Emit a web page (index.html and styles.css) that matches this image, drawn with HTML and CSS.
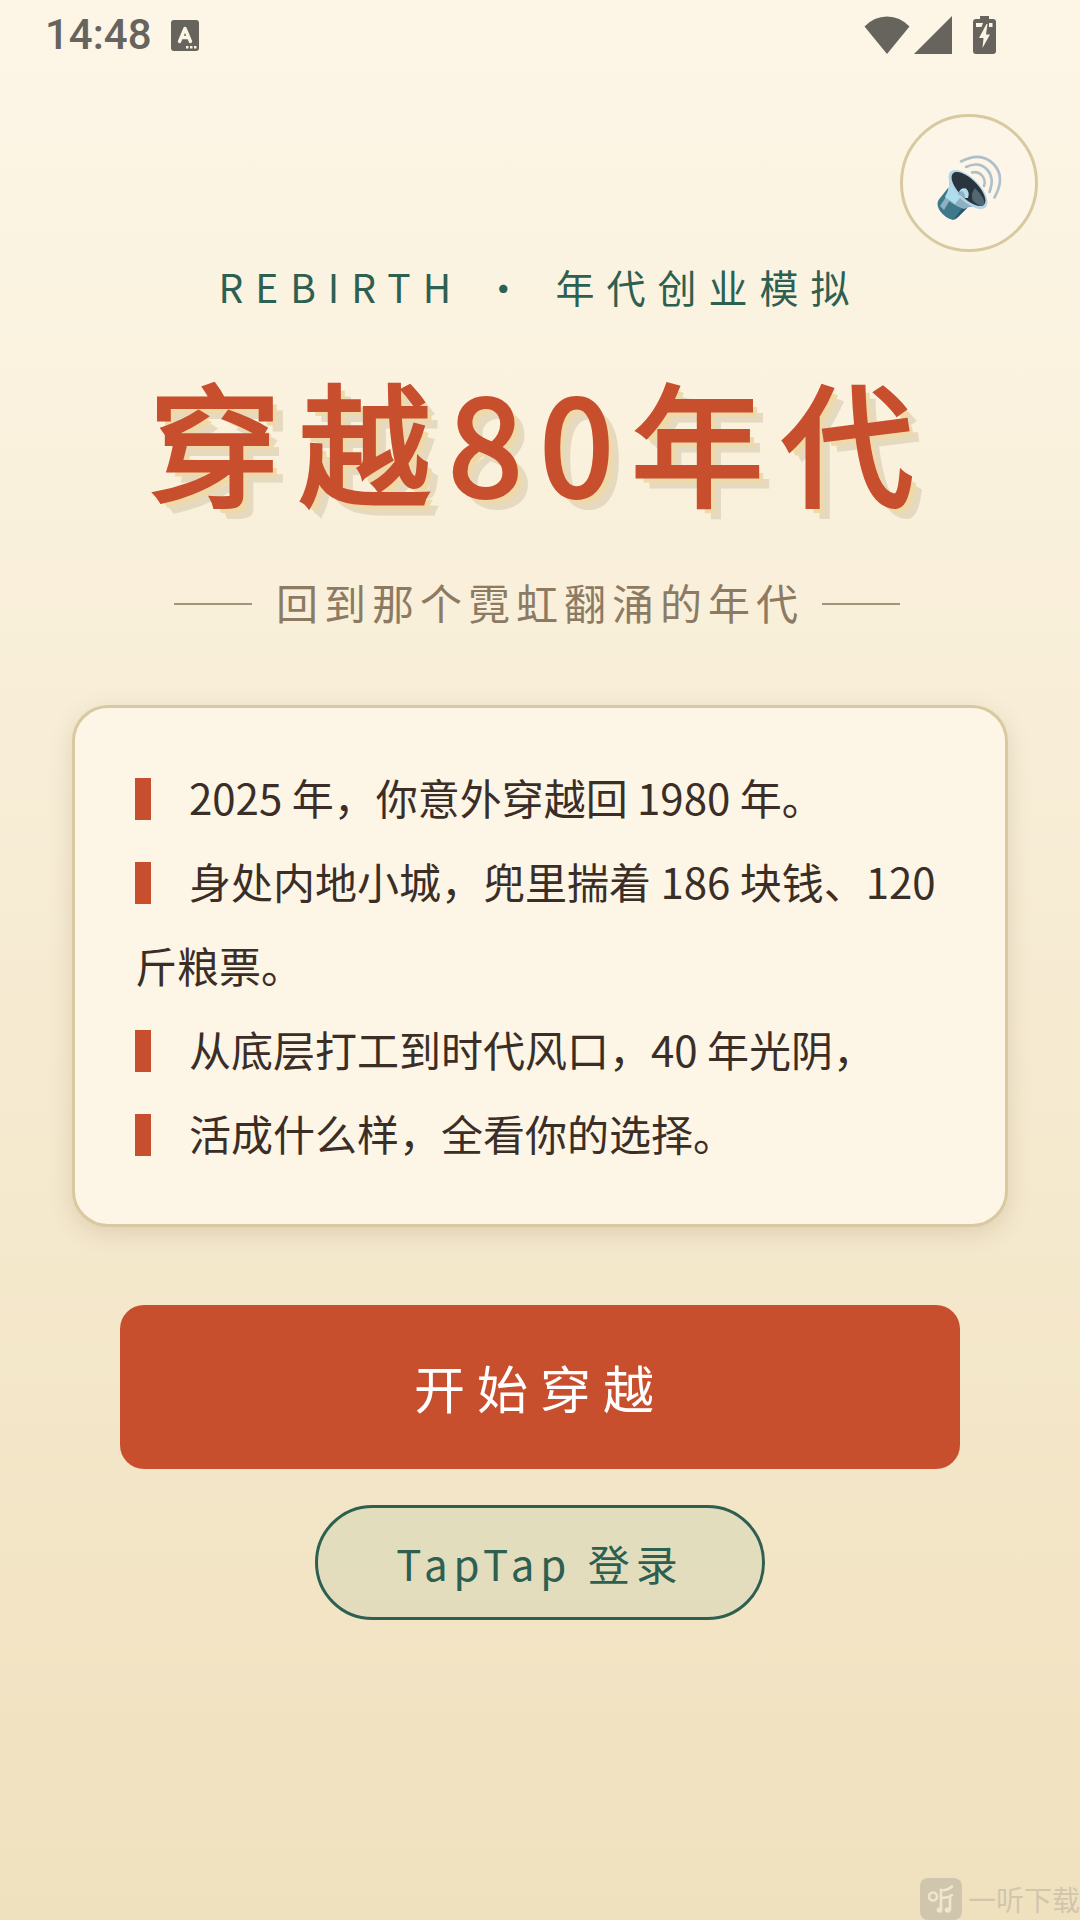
FILE: index.html
```html
<!DOCTYPE html>
<html lang="zh-CN">
<head>
    <meta charset="UTF-8">
    <meta name="viewport" content="width=device-width, initial-scale=1.0">
    <title>穿越80年代</title>
    <link rel="stylesheet" href="styles.css">
</head>
<body>
    <header class="status-bar">
        <div class="status-left">
            <span class="time">14:48</span>
            <svg width="28" height="31" viewBox="0 0 28 31">
                <rect width="28" height="31" rx="3" fill="#66645c"/>
                <path d="M8.500 21.500L14 8.500L19.500 21.500M10.500 17.500H17.500" fill="none" stroke="#fbf4e4" stroke-width="3.400" stroke-linecap="round" stroke-linejoin="round"/>
                <path d="M15 26h2.500v2.500h-2.500zM19 26h2.500v2.500h-2.500zM23 26h2.500v2.500h-2.500z" fill="#fbf4e4"/>
            </svg>
        </div>
        <div class="status-right">
            <svg width="46" height="38" viewBox="0 0 46 38" fill="#66645c">
                <path d="M0.500 10.500Q10 0.500 23 0.500T45.500 10.500L23 38z"/>
            </svg>
            <svg width="38" height="38" viewBox="0 0 38 38" fill="#66645c">
                <path d="M38 0V38H0z"/>
            </svg>
            <svg class="battery" width="23" height="38" viewBox="0 0 23 38">
                <path d="M7 0h9v3h4q3 0 3 3v29q0 3-3 3H3q-3 0-3-3V6q0-3 3-3h4z" fill="#66645c"/>
                <path d="M3 7h7l-1.500 4H3zM16 7H19.500v4h-3.500z" fill="#fbf4e4"/>
                <path d="M13.500 8L6 22h4.500L9.500 32L17 18.500h-4L14.500 8z" fill="#fbf4e4"/>
            </svg>
        </div>
    </header>

    <div class="toolbar">
        <button class="sound-btn" type="button" aria-label="声音">
            <svg width="66" height="66" viewBox="0 0 66 66">
                <!-- 喇叭底座 -->
                <path d="M12 33L2.500 45Q0 50 4 56Q9 63 17 65Q20 65 22 62L32 52z" fill="#3f788a"/>
                <path d="M22 62L31 53L28 51L18 64z" fill="#285a6c"/>
                <path d="M10 42L4 51L8 55L14 45z" fill="#8fb0c3"/>
                <path d="M13 18Q15 33 9 42Q16 50 28 54Q35 50 46 53z" fill="#8fb0c3"/>
                <path d="M13 20Q15 33 9 42L19 49L27 39z" fill="#aedeed"/>
                <!-- 喇叭口 -->
                <ellipse cx="32" cy="34.500" rx="25" ry="11.500" transform="rotate(45 32 34.500)" fill="#b2d4e8"/>
                <ellipse cx="32.500" cy="34" rx="22" ry="9.500" transform="rotate(45 32.500 34)" fill="#29343e"/>
                <path d="M39 33Q34 39 37 46Q45 53 48 50Q50 44 39 33z" fill="#536770"/>
                <path d="M23 37Q25 32 30 33.500Q34 37 32 43L29 43z" fill="#aedeed"/>
                <path d="M22 39L25 36Q29 36 29 43z" fill="#8fb0c3"/>
                <!-- 声波 -->
                <g fill="none" stroke="#aebfca" stroke-width="2.600" stroke-linecap="round">
                    <path d="M36 17.500Q42 16 46 20.500T48 31"/>
                    <path d="M30 12Q43 6 51 14.500T53.500 37"/>
                    <path d="M25 6.500Q45-4 57.500 9T58.500 42.500"/>
                </g>
            </svg>
        </button>
    </div>

    <main class="home">
        <p class="tagline">REBIRTH · 年代创业模拟</p>
        <h1 class="title">穿越80年代</h1>
        <p class="subtitle">回到那个霓虹翻涌的年代</p>

        <section class="intro">
            <p>2025 年，你意外穿越回 1980 年。</p>
            <p>身处内地小城，兜里揣着 186 块钱、120 斤粮票。</p>
            <p>从底层打工到时代风口，40 年光阴，</p>
            <p>活成什么样，全看你的选择。</p>
        </section>

        <div class="actions">
            <button class="btn-start" type="button">开始穿越</button>
            <button class="btn-login" type="button">TapTap 登录</button>
        </div>
    </main>

    <footer class="watermark">
        <svg width="42" height="42" viewBox="0 0 42 42">
            <rect width="42" height="42" rx="8" fill="#d0c6ae"/>
            <g fill="none" stroke="#f0e6cc" stroke-width="2.600" stroke-linecap="round">
                <circle cx="13" cy="18.500" r="4"/>
                <path d="M21 32V12Q27 13 32 8.500M21 20Q28 20 32 17M30 19V32"/>
            </g>
            <circle cx="19.500" cy="32" r="2.800" fill="#f0e6cc"/>
            <circle cx="27.500" cy="32" r="2.800" fill="#f0e6cc"/>
        </svg>
        <span>一听下载</span>
    </footer>
</body>
</html>
```
FILE: styles.css
```css
* {
    box-sizing: border-box;
}

body {
    margin: 0;
    min-height: 100vh;
    display: flex;
    flex-direction: column;
    font-family: "Noto Sans CJK SC", sans-serif;
    color: #3a2e26;
    background: linear-gradient(to bottom, #fdf6e7, #f0e1be);
}

p,
h1 {
    margin: 0;
}

svg {
    display: block;
    flex: none;
}

/* 状态栏 */
.status-bar {
    display: flex;
    justify-content: space-between;
    align-items: center;
    height: 70px;
    padding: 0 84px 0 45px;
}

.status-left {
    display: flex;
    align-items: center;
    gap: 19px;
}

.time {
    font-family: Roboto, sans-serif;
    font-size: 42px;
    font-weight: 500;
    line-height: 48px;
    color: #66645c;
}

.status-right {
    display: flex;
    align-items: center;
    gap: 4px;
}

.battery {
    margin-left: 17px;
}

/* 声音按钮 */
.toolbar {
    display: flex;
    justify-content: flex-end;
    padding: 44px 42px 0;
}

.sound-btn {
    display: flex;
    justify-content: center;
    align-items: center;
    width: 138px;
    height: 138px;
    padding: 10px 0 0;
    border: 3px solid #d8c9a0;
    border-radius: 50%;
    background-color: #fdf6e8;
    cursor: pointer;
}

/* 标题 */
.home {
    text-align: center;
    padding: 4px 72px 0;
}

.tagline {
    font-size: 39px;
    line-height: 60px;
    letter-spacing: 12px;
    color: #2d6050;
}

.title {
    margin-top: 43px;
    font-size: 132px;
    font-weight: 400;
    line-height: 160px;
    letter-spacing: 18px;
    color: #c84f2d;
    -webkit-text-stroke: 4px #c84f2d;
    text-shadow: 6px 6px 0 #f0d9a8, 12px 12px 0 #e5d9c0;
}

.subtitle {
    display: flex;
    justify-content: center;
    align-items: center;
    gap: 24px;
    margin-top: 53px;
    font-size: 42px;
    line-height: 60px;
    letter-spacing: 6px;
    color: #8c7a62;
}

.subtitle::before,
.subtitle::after {
    content: "";
    width: 78px;
    height: 2px;
    margin-top: 3px;
    background-color: #a3957a;
}

/* 抵消末尾字间距 */
.subtitle::after {
    margin-left: -6px;
    margin-right: 6px;
}

/* 简介卡片 */
.intro {
    margin-top: 73px;
    padding: 47px 60px 49px;
    border: 3px solid #d8c9a0;
    border-radius: 36px;
    background-color: #fdf5e6;
    box-shadow: 0 6px 24px rgba(90, 60, 30, 0.15);
    font-size: 42px;
    line-height: 84px;
    text-align: left;
}

.intro p::before {
    content: "";
    display: inline-block;
    width: 16px;
    height: 42px;
    margin-right: 38px;
    vertical-align: -5px;
    background-color: #c84f2d;
}

/* 操作按钮 */
.actions {
    display: flex;
    flex-direction: column;
    align-items: center;
    gap: 36px;
    margin-top: 78px;
    padding: 0 48px;
}

.actions button {
    font-family: inherit;
    cursor: pointer;
}

.btn-start {
    width: 100%;
    padding: 45px;
    border: none;
    border-radius: 24px;
    background-color: #c84f2d;
    color: #fff;
    font-size: 51px;
    line-height: 74px;
    letter-spacing: 12px;
}

.btn-login {
    padding: 24px 78px;
    border: 3px solid #2d6050;
    border-radius: 60px;
    background-color: rgba(92, 160, 119, 0.1);
    color: #2d6050;
    font-size: 42px;
    line-height: 61px;
    letter-spacing: 6px;
}

/* 水印 */
.watermark {
    display: flex;
    align-self: flex-end;
    align-items: center;
    gap: 6px;
    margin-top: auto;
    color: #d0c6ae;
    font-size: 28px;
    line-height: 42px;
}
```
